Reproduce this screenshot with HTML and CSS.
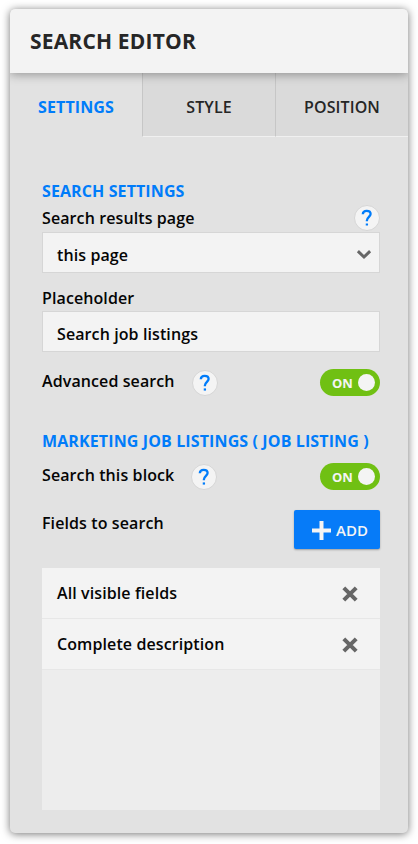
FILE: index.html
```html
<!DOCTYPE html>
<html lang="en">
<head>
<meta charset="utf-8">
<title>Search Editor</title>
<link rel="stylesheet" href="styles.css">
</head>
<body>
<main class="panel">
  <header class="header"><h1 class="title">SEARCH EDITOR</h1></header>
  <nav class="tabs">
    <a class="tab active"><span>SETTINGS</span></a>
    <a class="tab"><span>STYLE</span></a>
    <a class="tab"><span>POSITION</span></a>
  </nav>
  <div class="content">
    <section class="group">
      <h2 class="heading">SEARCH SETTINGS</h2>
      <div class="row row-label">
        <span class="label">Search results page</span>
        <span class="help end"><svg width="12" height="18" viewBox="0 0 12 18"><path d="M1.800 5.200C1.900 2.900 3.600 1.800 5.700 1.800C8.100 1.800 9.600 3 9.600 5C9.600 7.600 5.900 8.200 5.900 11.600V12.200"/><path d="M5.900 14.400V16.600"/></svg></span>
      </div>
      <div class="field select"><span>this page</span>
        <svg class="chevron" width="16" height="11" viewBox="0 0 16 11"><path d="M1.900 2.200L8 8L14.100 2.200"/></svg>
      </div>
      <div class="row row-placeholder"><span class="label">Placeholder</span></div>
      <div class="field"><span>Search job listings</span></div>
      <div class="row row-switch first">
        <span class="label">Advanced search</span>
        <span class="help"><svg width="12" height="18" viewBox="0 0 12 18"><path d="M1.800 5.200C1.900 2.900 3.600 1.800 5.700 1.800C8.100 1.800 9.600 3 9.600 5C9.600 7.600 5.900 8.200 5.900 11.600V12.200"/><path d="M5.900 14.400V16.600"/></svg></span>
        <span class="toggle"><span>ON</span><i class="knob"></i></span>
      </div>
    </section>
    <section class="group second">
      <h2 class="heading wide">MARKETING JOB LISTINGS ( JOB LISTING )</h2>
      <div class="row row-switch">
        <span class="label">Search this block</span>
        <span class="help"><svg width="12" height="18" viewBox="0 0 12 18"><path d="M1.800 5.200C1.900 2.900 3.600 1.800 5.700 1.800C8.100 1.800 9.600 3 9.600 5C9.600 7.600 5.900 8.200 5.900 11.600V12.200"/><path d="M5.900 14.400V16.600"/></svg></span>
        <span class="toggle"><span>ON</span><i class="knob"></i></span>
      </div>
      <div class="row row-add">
        <span class="label">Fields to search</span>
        <button class="add"><svg width="19" height="19" viewBox="0 0 19 19"><path d="M9.500 0V19M0 9.500H19"/></svg><span>ADD</span></button>
      </div>
      <div class="list">
        <div class="item"><span>All visible fields</span><svg width="16" height="16" viewBox="0 0 16 16"><path d="M1.800 1.800L14.200 14.200M14.200 1.800L1.800 14.200"/></svg></div>
        <div class="item"><span>Complete description</span><svg width="16" height="16" viewBox="0 0 16 16"><path d="M1.800 1.800L14.200 14.200M14.200 1.800L1.800 14.200"/></svg></div>
      </div>
    </section>
  </div>
</main>
</body>
</html>
```
FILE: styles.css
```css
* { box-sizing: border-box; }
body {
  margin: 0;
  padding: 9px 10px 11px;
  background: #fff;
  color: #050505;
  font: 600 16px/22px "Open Sans", sans-serif;
  letter-spacing: .1px;
}
.panel {
  height: 824px;
  border-radius: 5px;
  overflow: hidden;
  background: #e2e2e2;
  box-shadow: 0 1px 9px rgba(0, 0, 0, .55);
}
.header {
  position: relative;
  height: 64px;
  padding: 0 20px;
  display: flex;
  align-items: center;
  background: #f3f3f3;
  box-shadow: 0 1px 10px rgba(0, 0, 0, .38);
}
.title {
  margin: 0;
  font-size: 21px;
  line-height: 28px;
  font-weight: 700;
  letter-spacing: .18px;
  color: #262626;
}
.tabs { height: 64px; display: grid; grid-template-columns: 132px 133px 133px; }
.tab {
  display: flex;
  align-items: center;
  justify-content: center;
  padding-top: 5px;
  background: #dadada;
  border-bottom: 1px solid #f0f0f0;
  border-left: 1px solid #c6c6c6;
  color: #262626;
}
.tab.active {
  background: none;
  border-left: 0;
  border-color: transparent;
  color: #007cfa;
  font-weight: 700;
}
.content { padding: 43px 28px 0 32px; }
.heading {
  margin: 0;
  font-size: 16px;
  line-height: 22px;
  font-weight: 700;
  color: #007cfa;
}
.wide { white-space: nowrap; letter-spacing: .12px; }
.row { display: flex; align-items: center; white-space: nowrap; }
.row-label { height: 30px; padding-top: 1px; }
.row-label .label { padding-top: 1px; }
.row-placeholder { height: 38px; padding-top: 12px; }
.row-switch { height: 48px; }
.row-switch.first { height: 60px; }
.row-switch .label { padding-bottom: 3px; }
.help {
  width: 26px;
  height: 26px;
  margin-left: 17px;
  display: flex;
  align-items: center;
  justify-content: center;
  border-radius: 50%;
  border: 1px solid #d6d6d6;
  background: #f4f4f4;
}
.row-switch .help { position: relative; top: 1px; }
.help.end { margin-left: auto; }
svg { display: block; fill: none; }
.help svg { stroke: #007cfa; stroke-width: 2.300; }
.field {
  height: 41px;
  padding: 4px 7px 0 14px;
  display: flex;
  align-items: center;
  justify-content: space-between;
  background: #f3f3f3;
  border: 1px solid #d6d6d6;
}
.chevron { stroke: #666; stroke-width: 3; }
.toggle {
  width: 60px;
  height: 27px;
  margin-left: auto;
  padding: 0 5px 0 12px;
  display: flex;
  align-items: center;
  justify-content: space-between;
  border-radius: 14px;
  background: #70c013;
  color: #f4f4f4;
  font-size: 13px;
  font-weight: 700;
  letter-spacing: -.2px;
}
.toggle span { padding-top: 1px; }
.knob { width: 17px; height: 17px; border-radius: 50%; background: #f4f4f4; }
.second { padding-top: 18px; }
.row-add { height: 68px; padding-bottom: 9px; }
.row-add .label { padding-bottom: 13px; }
.add {
  width: 86px;
  height: 39px;
  margin-left: auto;
  padding: 2px 0 0 18px;
  display: flex;
  align-items: center;
  gap: 5px;
  border: 0;
  border-radius: 2px;
  background: #067bf8;
  box-shadow: 0 1px 2px rgba(0, 0, 0, .3);
  color: #f4f4f4;
  font: 600 15px/22px "Open Sans", sans-serif;
}
.add svg { stroke: #f4f4f4; stroke-width: 4; }
.add span { padding-bottom: 1px; }
.list { height: 242px; background: #ededed; }
.item {
  height: 51px;
  padding: 1px 22px 0 15px;
  display: flex;
  align-items: center;
  justify-content: space-between;
  background: #f3f3f3;
  border-bottom: 1px solid #e7e7e7;
}
.item svg { margin-top: 1px; stroke: #666; stroke-width: 4; }
.item span { padding-bottom: 1px; }
```
